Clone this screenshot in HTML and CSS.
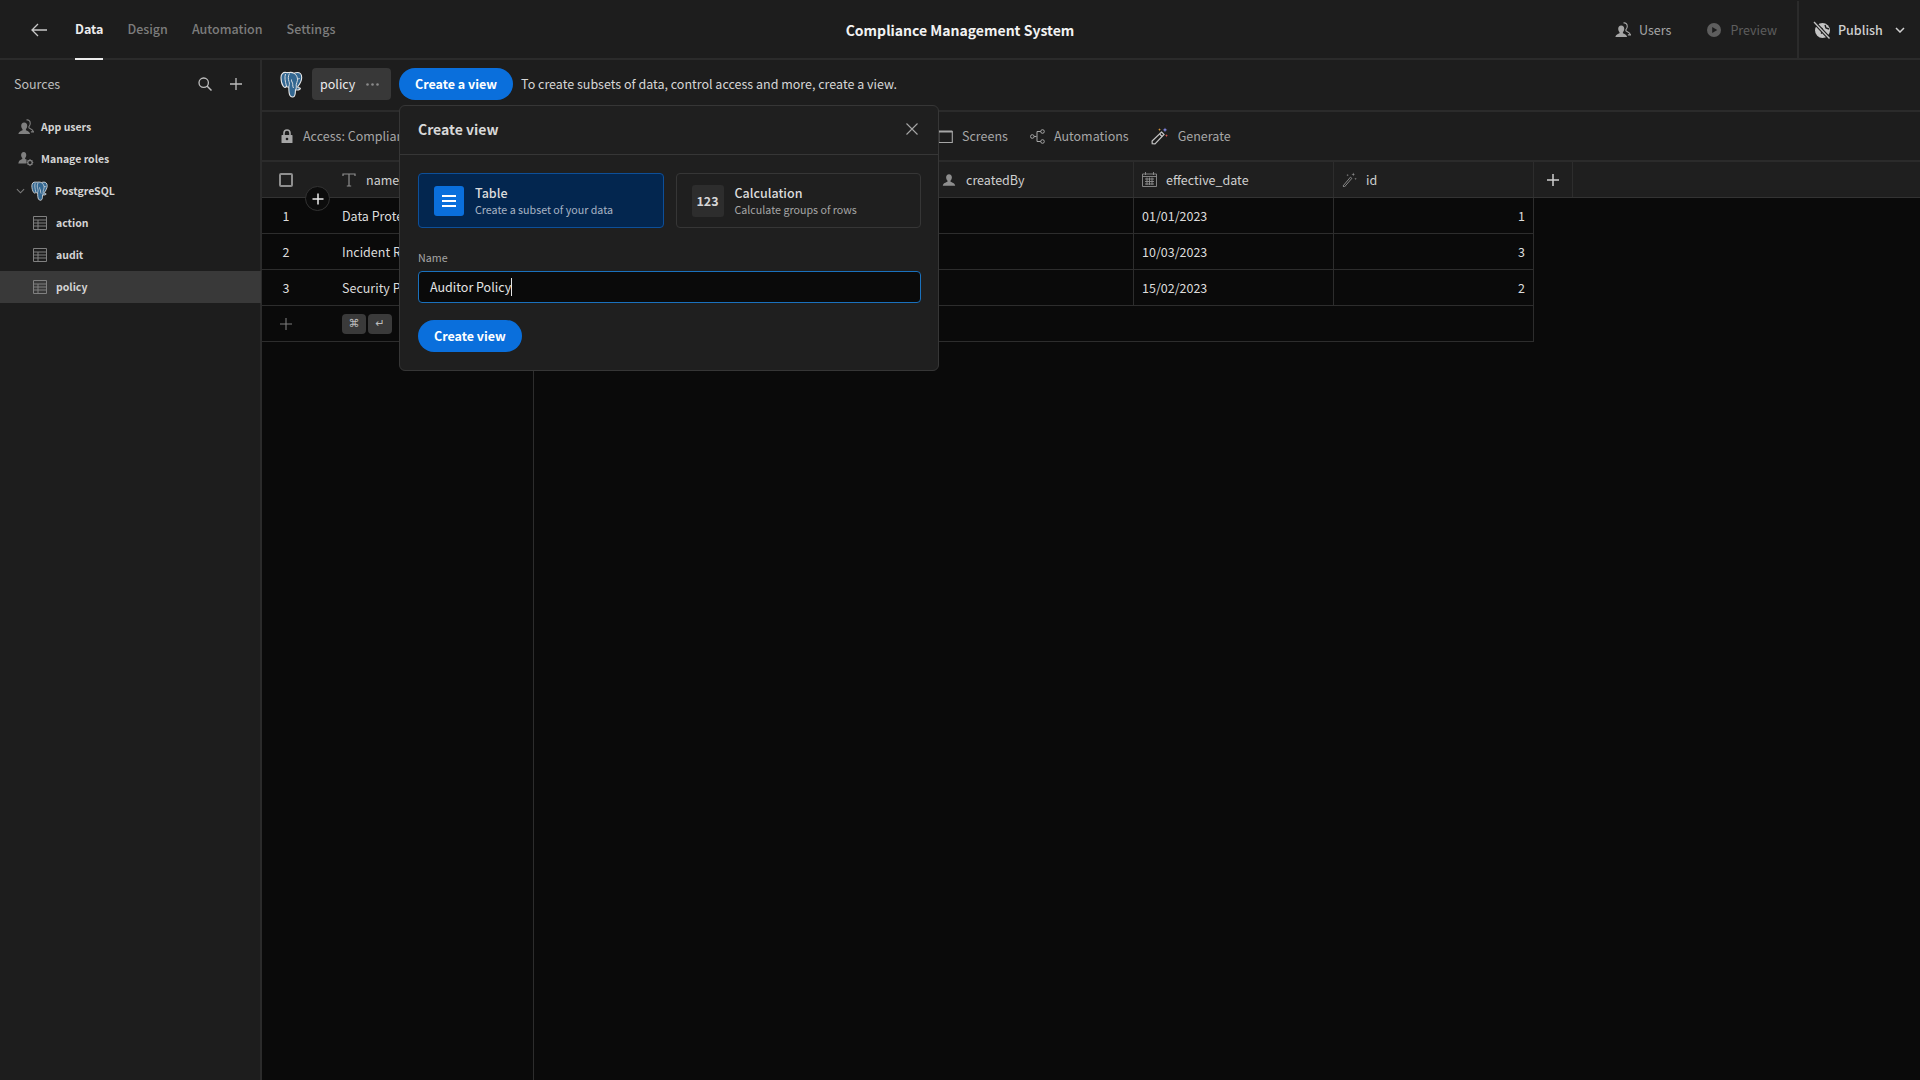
FILE: index.html
```html
<!DOCTYPE html>
<html>

<head>
    <meta charset="utf-8" />
    <title>Compliance Management System</title>
    <meta name="viewport" content="width=device-width, initial-scale=1">
    <link rel="stylesheet" href="styles.css">
</head>

<body>
    <svg class="sprite" xmlns="http://www.w3.org/2000/svg">
        <symbol id="i-pg" viewBox="0 0 24 27">
            <path d="M6 1.500C3 1 1 3.200 1 6.500c0 3 .9 7 2.400 9 1 1.300 2.200 1 3.100-.2.800.7 1.500 1 2.300 1 0 3 .2 6.500 1.200 8.200 1 1.700 3.400 2.200 4.500.5.900-1.400.9-4 1-6.300 1.600.5 3.200.3 4.400-.5 1-.7.300-1.400-.8-1.300-.9 0-1.400-.3-1.300-1.200 2-2.700 3.900-6.200 3.900-9.200C21.700 3 19.500 1.500 17.500 1.500c-1.300 0-2.500.2-3.500.7-1-.5-2.500-.9-3.700-.8C8.800 1.500 7.500 1.800 6 1.500z" fill="#336791" stroke="#e8e8e8" stroke-width="1.100"/>
            <path d="M9.500 2.500C8 5 8 8 9 10.500c.8 2 .3 4-.3 5.500M14 2.300c2.500 1.500 3.700 4 3.500 7-.1 1.500-1.300 3-1.300 4.500 0 1.500.3 3-.1 4.500M5.500 3C4.500 6 5 10 6.500 15.300M11.500 8.500c-.5 2 1.500 3 1.200 5-.1 1 .2 2.500.8 3.500M17.500 7.500c1 .5 1.800.4 2.300-.2" fill="none" stroke="#e8e8e8" stroke-width=".9"/>
        </symbol>
        <symbol id="i-table" viewBox="0 0 14 14">
            <path d="M.5.500h13v13H.5zM.5 4h13M.5 7h13M.5 10h13M5 4v9.500" fill="none" stroke="currentColor" stroke-width="1"/>
        </symbol>
        <symbol id="i-user" viewBox="0 0 18 18">
            <path d="M9 1.500c-2.400 0-3.700 1.900-3.700 4 0 1.800.8 3.300 1.700 4.200v1.500C5 12.200 1.500 12.800 1 16.500h16c-.5-3.700-4-4.300-6-5.300V9.700c.9-.9 1.700-2.400 1.700-4.200 0-2.100-1.300-4-3.700-4z" fill="currentColor"/>
        </symbol>
        <symbol id="i-users" viewBox="0 0 18 18">
            <path d="M7 4c-2.200 0-3.400 1.700-3.400 3.700 0 1.600.7 3 1.500 3.800v1.200C3.500 13.500.8 14 .4 17h13.200c-.4-3-3.100-3.500-4.700-4.300v-1.200c.8-.8 1.500-2.200 1.500-3.800C10.400 5.700 9.200 4 7 4z" fill="currentColor"/>
            <path d="M9.500 1.200c2.200-.7 4.300.8 4.300 3.500 0 1.600-.7 3-1.500 3.800V10c1.500.7 4.500 1.500 5.200 4.500h-3" fill="none" stroke="currentColor" stroke-width="1.200"/>
        </symbol>
    </svg>

    <header class="topbar">
        <nav class="topbar-left">
            <svg class="back" viewBox="0 0 16 14"><path d="M7 1 1 7l6 6M1 7h15" fill="none" stroke="currentColor" stroke-width="1.300"/></svg>
            <a class="tab active">Data</a>
            <a class="tab">Design</a>
            <a class="tab">Automation</a>
            <a class="tab">Settings</a>
        </nav>
        <div class="app-title">Compliance Management System</div>
        <div class="topbar-right">
            <span class="top-link"><svg class="ic16"><use href="#i-users"/></svg>Users</span>
            <span class="top-link dim">
                <svg class="ic14" viewBox="0 0 14 14"><circle cx="7" cy="7" r="7" fill="currentColor"/><path d="M5.200 4v6l5-3z" fill="#1d1d1d"/></svg>
                Preview
            </span>
            <div class="publish">
                <svg class="ic18" viewBox="0 0 18 18">
                    <circle cx="9.500" cy="9.500" r="7.500" fill="#c4c4c4"/>
                    <path d="M6 6.500l3 1 1 3-2 2M12 4l1 3 3 1" fill="none" stroke="#1d1d1d" stroke-width="1.400"/>
                    <path d="M1.500 1.500 16 17" stroke="#1d1d1d" stroke-width="3.500"/>
                    <path d="M1 1l15.500 16.500" stroke="#c4c4c4" stroke-width="1.300"/>
                </svg>
                <span>Publish</span>
                <svg class="chev" viewBox="0 0 10 6"><path d="M1 1l4 4 4-4" fill="none" stroke="currentColor" stroke-width="1.500"/></svg>
            </div>
        </div>
    </header>

    <div class="workspace">
        <aside class="sidebar">
            <div class="sidebar-head">
                <span>Sources</span>
                <div class="sidebar-actions">
                    <svg class="ic14" viewBox="0 0 14 14"><circle cx="5.700" cy="5.700" r="4.700" fill="none" stroke="currentColor" stroke-width="1.300"/><path d="M9 9l4.500 4.500" stroke="currentColor" stroke-width="1.500"/></svg>
                    <svg class="ic12" viewBox="0 0 12 12"><path d="M6 0v12M0 6h12" stroke="currentColor" stroke-width="1.300"/></svg>
                </div>
            </div>
            <ul class="tree">
                <li class="tree-item lvl0"><svg class="ic16 muted"><use href="#i-users"/></svg>App users</li>
                <li class="tree-item lvl0">
                    <svg class="ic16 muted" viewBox="0 0 18 18">
                        <path d="M6.500 1c-2 0-3 1.600-3 3.400 0 1.500.6 2.700 1.300 3.400v1.100C3.300 9.700.8 10.300.4 14h9.200V9.500l-1.600-.6V7.800c.7-.7 1.300-1.900 1.300-3.400C9.300 2.600 8.500 1 6.500 1z" fill="currentColor"/>
                        <circle cx="13.500" cy="13" r="2.500" fill="none" stroke="currentColor" stroke-width="1.400"/>
                        <path d="M13.500 9v1.500M13.500 15.500V17M9.800 13h1.500M15.700 13h1.500M10.900 10.400l1 1M15.100 14.600l1 1M16.100 10.400l-1 1M11.900 14.600l-1 1" stroke="currentColor" stroke-width="1.100"/>
                    </svg>
                    Manage roles
                </li>
                <li class="tree-item source">
                    <svg class="caret" viewBox="0 0 10 6"><path d="M1 1l4 4 4-4" fill="none" stroke="currentColor" stroke-width="1.200"/></svg>
                    <svg class="pg-small"><use href="#i-pg"/></svg>PostgreSQL
                </li>
                <li class="tree-item lvl2"><svg class="ic14 muted"><use href="#i-table"/></svg>action</li>
                <li class="tree-item lvl2"><svg class="ic14 muted"><use href="#i-table"/></svg>audit</li>
                <li class="tree-item lvl2 selected"><svg class="ic14 muted"><use href="#i-table"/></svg>policy</li>
            </ul>
        </aside>

        <main class="content">
            <div class="tabs-row">
                <svg class="pg-large"><use href="#i-pg"/></svg>
                <div class="table-tab">policy<svg class="dots" viewBox="0 0 13 3"><circle cx="1.500" cy="1.500" r="1.300"/><circle cx="6.500" cy="1.500" r="1.300"/><circle cx="11.500" cy="1.500" r="1.300"/></svg></div>
                <button class="btn-primary">Create a view</button>
                <span class="hint">To create subsets of data, control access and more, create a view.</span>
            </div>

            <div class="actions-row">
                <div class="access">
                    <svg class="ic14" viewBox="0 0 12 14"><path d="M3 6V4a3 3 0 0 1 6 0v2" fill="none" stroke="currentColor" stroke-width="1.600"/><path d="M1 6h10a.5.500 0 0 1 .5.500v7a.5.500 0 0 1-.5.500H1a.5.500 0 0 1-.5-.500v-7A.5.500 0 0 1 1 6z" fill="currentColor"/><circle cx="6" cy="10" r="1.300" fill="#1d1d1d"/></svg>
                    <span>Access: Compliance</span>
                </div>
                <span class="action">
                    <svg class="ic15" viewBox="0 0 15 13"><path d="M.7 1.500h13.600v11H.7z" fill="none" stroke="currentColor" stroke-width="1.100"/><path d="M.7 1.500h13.600" stroke="currentColor" stroke-width="2"/></svg>
                    Screens
                </span>
                <span class="action">
                    <svg class="ic15" viewBox="0 0 15 15"><g fill="none" stroke="currentColor" stroke-width="1"><circle cx="2.300" cy="7.500" r="1.800"/><circle cx="12.500" cy="2.500" r="1.800"/><circle cx="12.500" cy="12.500" r="1.800"/><path d="M4.100 7.500h2.400M10.700 2.500H7v10h3.700"/></g></svg>
                    Automations
                </span>
                <span class="action">
                    <svg class="ic18" viewBox="0 0 18 18">
                        <path d="M10.500 5 13 7.500 4 16.800l-2.800-.2-.1-2.600z" fill="none" stroke="#c4c4c4" stroke-width="1.200"/>
                        <path d="M8.600 7l2.500 2.500" stroke="#c4c4c4" stroke-width="1.200"/>
                        <path d="M14 .5l.6 1.800 1.800.6-1.800.6-.6 1.800-.6-1.800-1.800-.6 1.800-.6z" fill="#8a8ff0"/>
                        <path d="M15.500 7l.4 1.200 1.200.4-1.200.4-.4 1.200-.4-1.200-1.200-.4 1.200-.4z" fill="#e0574f"/>
                        <path d="M8.500 1l.4 1.200 1.200.4-1.200.4-.4 1.200-.4-1.200L7 2.600l1.200-.4z" fill="#e8a33d"/>
                    </svg>
                    Generate
                </span>
            </div>

            <div class="grid">
                <div class="grid-row head">
                    <div class="cell idx"><span class="checkbox"></span></div>
                    <div class="cell th"><svg class="ic14" viewBox="0 0 14 14"><path d="M1 3V1h12v2M7 1v12M4.800 13h4.400" fill="none" stroke="currentColor" stroke-width="1.200"/></svg>name</div>
                    <div class="cell"></div>
                    <div class="cell"></div>
                    <div class="cell th"><svg class="ic14"><use href="#i-user"/></svg>createdBy</div>
                    <div class="cell th"><svg class="ic15" viewBox="0 0 15 15"><path d="M.5 2h14v12.500H.5zM3.500 0v3M11.500 0v3M.5 4.500h14M3 7h9M3 9.500h9M3 12h9M5 5.500V13M7.500 5.500V13M10 5.500V13" fill="none" stroke="currentColor" stroke-width=".9"/></svg>effective_date</div>
                    <div class="cell th"><svg class="ic15" viewBox="0 0 16 16"><path d="M1 15 9 5.500l1.500 1.300L2.500 16z" fill="none" stroke="currentColor" stroke-width="1"/><path d="M12 .5l.5 1.500 1.500.5-1.500.5L12 4.500l-.5-1.500L10 2.500l1.500-.5zM6 2l.3 1 1 .3-1 .3-.3 1-.3-1-1-.3 1-.3zM14.500 6l.3 1 1 .3-1 .3-.3 1-.3-1-1-.3 1-.3z" fill="currentColor"/></svg>id</div>
                    <div class="cell add-col"><svg class="ic12" viewBox="0 0 12 12"><path d="M6 0v12M0 6h12" stroke="currentColor" stroke-width="1.500"/></svg></div>
                </div>
                <div class="grid-row">
                    <div class="cell idx">1</div>
                    <div class="cell">Data Protection Policy</div>
                    <div class="cell"></div>
                    <div class="cell"></div>
                    <div class="cell"></div>
                    <div class="cell">01/01/2023</div>
                    <div class="cell num">1</div>
                </div>
                <div class="grid-row">
                    <div class="cell idx">2</div>
                    <div class="cell">Incident Response Policy</div>
                    <div class="cell"></div>
                    <div class="cell"></div>
                    <div class="cell"></div>
                    <div class="cell">10/03/2023</div>
                    <div class="cell num">3</div>
                </div>
                <div class="grid-row">
                    <div class="cell idx">3</div>
                    <div class="cell">Security Policy</div>
                    <div class="cell"></div>
                    <div class="cell"></div>
                    <div class="cell"></div>
                    <div class="cell">15/02/2023</div>
                    <div class="cell num">2</div>
                </div>
                <div class="add-row">
                    <div class="add-idx"><svg class="ic12" viewBox="0 0 12 12"><path d="M6 0v12M0 6h12" stroke="currentColor" stroke-width="1.100"/></svg></div>
                    <kbd class="key">&#8984;</kbd>
                    <kbd class="key">&#8629;</kbd>
                </div>
                <div class="grid-fill"></div>

                <button class="add-circle"><svg class="ic12" viewBox="0 0 12 12"><path d="M6 .5v11M.5 6h11" stroke="currentColor" stroke-width="1.500"/></svg></button>
            </div>

            <section class="popover">
                <div class="popover-head">
                    <span>Create view</span>
                    <svg class="ic12" viewBox="0 0 12 12"><path d="M.5.500l11 11M11.500.500l-11 11" stroke="currentColor" stroke-width="1.100"/></svg>
                </div>
                <div class="popover-body">
                    <div class="options">
                        <div class="option on">
                            <div class="option-icon blue">
                                <svg viewBox="0 0 14 12" width="14" height="12"><path d="M0 1h14M0 6h14M0 11h14" stroke="#fff" stroke-width="2"/></svg>
                            </div>
                            <div class="option-text"><b>Table</b><small>Create a subset of your data</small></div>
                        </div>
                        <div class="option">
                            <div class="option-icon grey">123</div>
                            <div class="option-text"><b>Calculation</b><small>Calculate groups of rows</small></div>
                        </div>
                    </div>
                    <label class="field-label">Name</label>
                    <div class="input">Auditor Policy<i class="caret-line"></i></div>
                    <button class="btn-primary">Create view</button>
                </div>
            </section>
        </main>
    </div>
</body>

</html>
```
FILE: styles.css
```css
/* base */

* {
    box-sizing: border-box;
}

html, body {
    margin: 0;
    height: 100%;
}

body {
    display: flex;
    flex-direction: column;
    height: 1080px;
    overflow: hidden;
    background-color: #0a0a0a;
    color: #e0e0e0;
    font-family: "Noto Sans CJK SC", "Liberation Sans", sans-serif;
    font-size: 12.5px;
    line-height: 18px;
}

.sprite {
    display: none;
}

.ic12 { width: 12px; height: 12px; flex: none; }
.ic14 { width: 14px; height: 14px; flex: none; }
.ic15 { width: 15px; height: 15px; flex: none; }
.ic16 { width: 16px; height: 16px; flex: none; }
.ic18 { width: 18px; height: 18px; flex: none; }

.muted {
    color: #808080;
}

/* top bar */

.topbar {
    display: grid;
    grid-template-columns: 1fr auto 1fr;
    flex: none;
    height: 60px;
    background-color: #1d1d1d;
    border-bottom: 2px solid #2b2b2b;
}

.topbar-left {
    display: flex;
    align-items: center;
    padding-left: 31px;
}

.back {
    width: 16px;
    height: 14px;
    margin-right: 28px;
    color: #c8c8c8;
}

.tab {
    display: flex;
    align-items: center;
    height: 60px;
    margin-right: 24px;
    padding-bottom: 2px;
    color: #7c7c7c;
    font-weight: 500;
}

.tab.active {
    color: #ececec;
    font-weight: 700;
    border-bottom: 2px solid #ececec;
    padding-bottom: 0;
}

.app-title {
    align-self: center;
    color: #f2f2f2;
    font-size: 14px;
    font-weight: 700;
}

.topbar-right {
    display: flex;
    justify-content: flex-end;
    align-items: center;
    color: #a6a6a6;
}

.top-link {
    display: flex;
    align-items: center;
    gap: 8px;
    margin-right: 36px;
}

.top-link.dim {
    margin-right: 20px;
    color: #5e5e5e;
    gap: 9px;
}

.publish {
    display: flex;
    align-items: center;
    height: 58px;
    width: 123px;
    padding-left: 14px;
    border-left: 2px solid #2b2b2b;
    color: #d0d0d0;
    font-weight: 500;
}

.publish span {
    margin-left: 7px;
}

.chev {
    width: 10px;
    height: 6px;
    margin-left: 12px;
}

/* sidebar */

.workspace {
    display: flex;
    flex: 1;
    min-height: 0;
}

.sidebar {
    flex: none;
    width: 262px;
    background-color: #1d1d1d;
    border-right: 2px solid #2b2b2b;
}

.sidebar-head {
    display: flex;
    justify-content: space-between;
    align-items: center;
    height: 50px;
    padding: 0 18px 2px 14px;
    color: #bdbdbd;
}

.sidebar-actions {
    display: flex;
    align-items: center;
    gap: 18px;
}

.tree {
    list-style: none;
    margin: 0;
    padding: 0;
    padding-top: 1px;
}

.tree-item {
    display: flex;
    align-items: center;
    height: 32px;
    font-size: 10.500px;
    font-weight: 700;
    color: #d4d4d4;
}

.tree-item svg {
    margin-right: 8px;
}

.lvl0 {
    padding-left: 18px;
}

.lvl0 svg {
    margin-right: 7px;
}

.source {
    padding-left: 16px;
}

.source .caret {
    width: 9px;
    height: 6px;
    margin-right: 6px;
    color: #7c7c7c;
}

.pg-small {
    width: 18px;
    height: 20px;
    margin-right: 6px !important;
}

.lvl2 {
    padding-left: 33px;
}

.lvl2 svg {
    margin-right: 9px;
}

.selected {
    margin-right: -1px;
    background-color: #393939;
}

/* main area */

.content {
    position: relative;
    display: flex;
    flex-direction: column;
    flex: 1;
    min-width: 0;
}

.tabs-row {
    display: flex;
    align-items: center;
    flex: none;
    height: 52px;
    padding: 0 0 2px 18px;
    background-color: #1d1d1d;
    border-bottom: 2px solid #2b2b2b;
}

.pg-large {
    width: 24px;
    height: 27px;
    margin-right: 8px;
}

.table-tab {
    display: flex;
    align-items: center;
    width: 79px;
    height: 32px;
    padding-left: 8px;
    margin-right: 8px;
    background-color: #383838;
    border-radius: 4px;
    color: #ececec;
}

.dots {
    width: 13px;
    height: 3px;
    margin-left: 11px;
    fill: #8a8a8a;
}

.btn-primary {
    height: 32px;
    padding: 0 16px;
    border: 0;
    border-radius: 16px;
    background-color: #0a6fdc;
    color: #fff;
    font-family: inherit;
    font-size: 12.500px;
    font-weight: 700;
    line-height: 18px;
}

.hint {
    margin-left: 8px;
    color: #d6d6d6;
}

.actions-row {
    display: flex;
    align-items: center;
    flex: none;
    height: 50px;
    padding-left: 18px;
    background-color: #1d1d1d;
    border-bottom: 2px solid #2b2b2b;
    color: #a6a6a6;
}

.access {
    display: flex;
    align-items: center;
    gap: 9px;
    width: 658px;
    overflow: hidden;
    white-space: nowrap;
}

.action {
    display: flex;
    align-items: center;
    gap: 9px;
    margin-right: 22px;
}

/* data grid */

.grid {
    position: relative;
    display: flex;
    flex-direction: column;
    flex: 1;
    min-height: 0;
    background-color: #0a0a0a;
}

.grid-row {
    display: grid;
    grid-template-columns: 72px repeat(6, 200px);
    width: 1272px;
    height: 36px;
    flex: none;
}

.grid-row.head {
    grid-template-columns: 72px repeat(6, 200px) 39px;
    width: 100%;
    background-color: #1f1f1f;
    border-bottom: 1px solid #333;
}

.cell {
    display: flex;
    align-items: center;
    min-width: 0;
    padding: 0 8px;
    border-right: 1px solid #2d2d2d;
    border-bottom: 1px solid #2d2d2d;
    white-space: nowrap;
    overflow: hidden;
    color: #dcdcdc;
}

.head .cell {
    border-bottom: 0;
}

.idx {
    justify-content: center;
    padding: 0 24px 0 0;
    border-right: 0;
}

.th {
    gap: 10px;
    color: #cfcfcf;
}

.th .ic15 {
    margin-right: -1px;
}

.th svg {
    color: #8e8e8e;
}

.num {
    justify-content: flex-end;
}

.add-col {
    justify-content: center;
    color: #d0d0d0;
}

.checkbox {
    display: block;
    width: 14px;
    height: 14px;
    border: 2px solid #8e8e8e;
    border-radius: 2px;
}

.add-row {
    display: flex;
    align-items: center;
    flex: none;
    width: 1272px;
    height: 36px;
    border-right: 1px solid #2d2d2d;
    border-bottom: 1px solid #2d2d2d;
}

.add-idx {
    display: flex;
    justify-content: center;
    width: 80px;
    padding-right: 32px;
    color: #7c7c7c;
}

.key {
    display: flex;
    justify-content: center;
    align-items: center;
    width: 24px;
    height: 20px;
    margin-right: 2px;
    background-color: #3a3a3a;
    border-radius: 4px;
    color: #bdbdbd;
    font-family: "DejaVu Sans", sans-serif;
    font-size: 11px;
}

.grid-fill {
    flex: 1;
    width: 272px;
    border-right: 1px solid #2d2d2d;
}

.add-circle {
    position: absolute;
    left: 43px;
    top: 24px;
    display: flex;
    justify-content: center;
    align-items: center;
    width: 25px;
    height: 25px;
    padding: 0;
    background-color: #0c0c0c;
    border: 1px solid #333;
    border-radius: 50%;
    color: #ececec;
}

/* create view popover */

.popover {
    position: absolute;
    left: 137px;
    top: 45px;
    width: 540px;
    height: 266px;
    background-color: #1f1f1f;
    border: 1px solid #363636;
    border-radius: 6px;
}

.popover-head {
    display: flex;
    justify-content: space-between;
    align-items: center;
    height: 49px;
    padding: 0 20px 2px 18px;
    border-bottom: 1px solid #363636;
    color: #d8d8d8;
    font-size: 14px;
    font-weight: 700;
}

.popover-head svg {
    color: #a6a6a6;
}

.popover-body {
    padding: 18px 17px 0 18px;
}

.options {
    display: flex;
    gap: 12px;
    height: 55px;
}

.option {
    display: flex;
    align-items: center;
    gap: 11px;
    flex: 1;
    padding-left: 15px;
    border: 1px solid #363636;
    border-radius: 4px;
}

.option.on {
    background-color: #03264f;
    border-color: #0d4f99;
}

.option-icon {
    display: flex;
    justify-content: center;
    align-items: center;
    flex: none;
    width: 30px;
    height: 30px;
    border-radius: 3px;
}

.option-icon.blue {
    background-color: #0a6fdc;
}

.option-icon.grey {
    width: 32px;
    height: 32px;
    background-color: #2d2d2d;
    color: #d6d6d6;
    font-size: 12.500px;
    font-weight: 700;
}

.option-text b {
    display: block;
    color: #dcdcdc;
    font-size: 12.500px;
    font-weight: 500;
    line-height: 18px;
}

.option-text small {
    display: block;
    color: #a6a6a6;
    font-size: 10.700px;
    line-height: 15px;
}

.on .option-text small {
    color: #a8b4c4;
}

.field-label {
    display: block;
    margin-top: 21px;
    color: #a6a6a6;
    font-size: 10.700px;
    line-height: 18px;
}

.input {
    display: flex;
    align-items: center;
    height: 32px;
    margin: 4px 0 17px;
    padding-left: 11px;
    background-color: #0a0a0a;
    border: 1px solid #1a71bd;
    border-radius: 4px;
    color: #e4e4e4;
}

.caret-line {
    display: block;
    width: 1px;
    height: 18px;
    background-color: #e4e4e4;
}
```
